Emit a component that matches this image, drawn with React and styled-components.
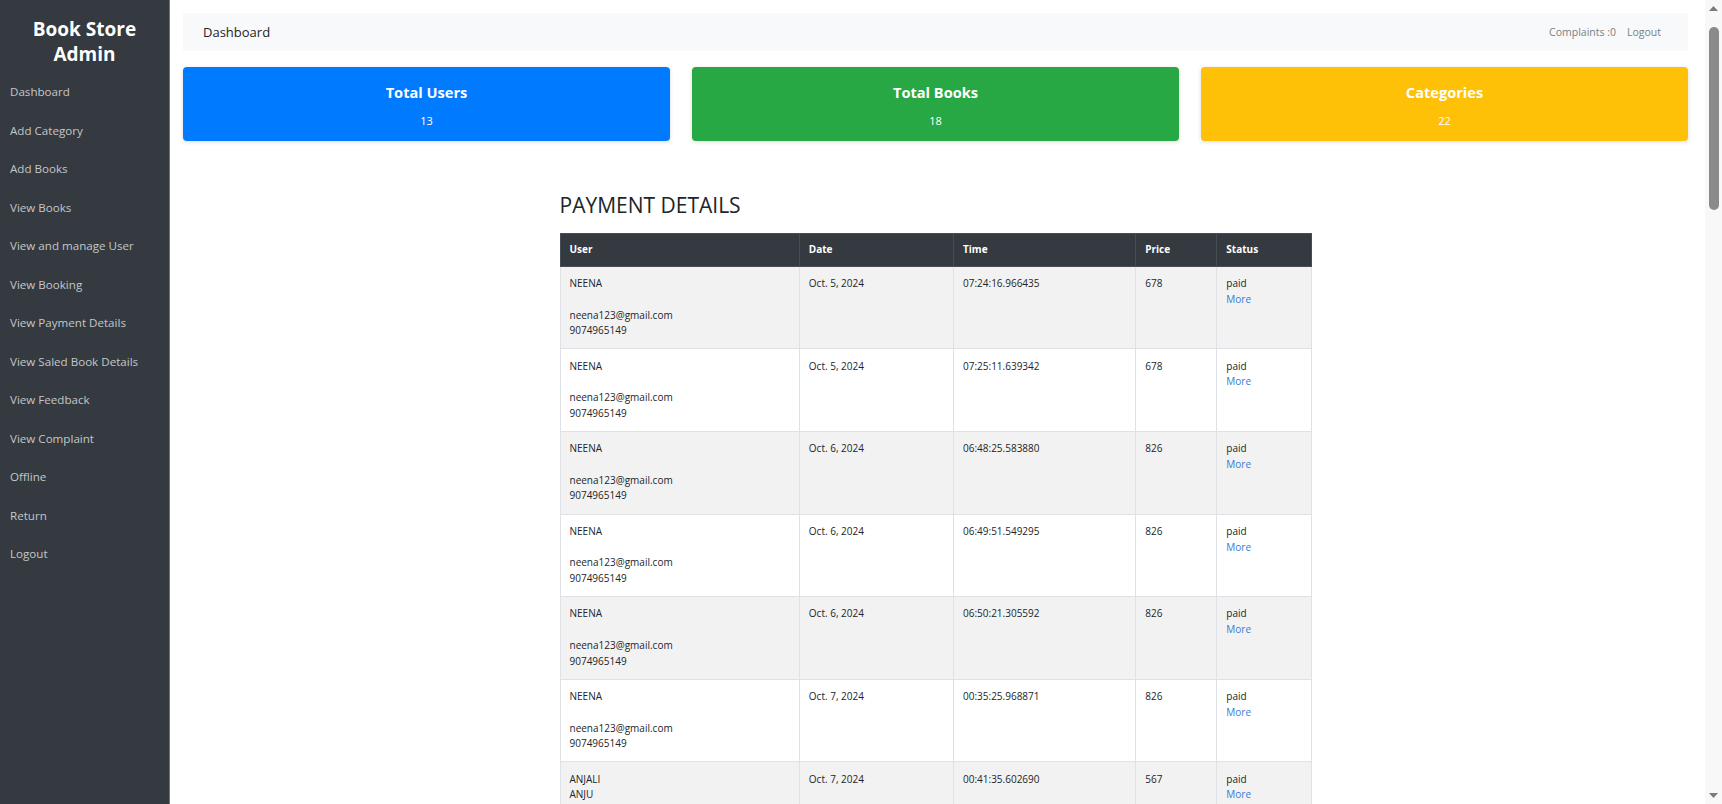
import React from 'react';
import styled, { createGlobalStyle } from 'styled-components';

const GlobalStyle = createGlobalStyle`
    html, body {
        margin: 0;
        padding: 0;
        background: #fff;
        font-family: "Open Sans", "Noto Sans", Arial, sans-serif;
        color: #212529;
    }
    * {
        box-sizing: border-box;
    }
`

const Layout = styled.div`
    display: flex;
    min-height: 100vh;
`

const Sidebar = styled.aside`
    width: 170px;
    flex-shrink: 0;
    background: #343a40;
    border-right: 1px solid #6f747a;
    padding-top: 17px;
`

const Brand = styled.h2`
    margin: 0 0 12px;
    color: #fff;
    font-size: 19px;
    font-weight: 700;
    line-height: 25px;
    text-align: center;
`

const MenuLink = styled.a`
    display: block;
    padding: 0 10px;
    height: 38.5px;
    line-height: 26px;
    color: #c4c6c8;
    font-size: 11.6px;
    text-decoration: none;
    cursor: pointer;
`

const Main = styled.main`
    flex: 1;
    min-width: 0;
    padding: 13px 34px 0 13px;
`

const TopBar = styled.nav`
    display: flex;
    align-items: center;
    justify-content: space-between;
    height: 38px;
    background: #f8f9fa;
    padding: 0 27px 0 20px;
`

const TopTitle = styled.span`
    font-size: 13px;
    color: #212529;
`

const TopLinks = styled.div`
    display: flex;
    gap: 11px;
    font-size: 10.5px;
    color: #7a7f84;
`

const Cards = styled.div`
    display: grid;
    grid-template-columns: repeat(3, 1fr);
    gap: 22px;
    margin-top: 16px;
`

const Card = styled.div`
    height: 74px;
    border-radius: 4px;
    background: ${p => p.$bg};
    color: #fff;
    text-align: center;
    box-shadow: 0 1px 4px rgba(0, 0, 0, 0.15);
    padding-top: 13px;
`

const CardTitle = styled.h5`
    margin: 0;
    font-size: 14.6px;
    font-weight: 700;
    line-height: 24px;
`

const CardValue = styled.p`
    margin: 9px 0 0;
    font-size: 11px;
    line-height: 16px;
`

const Section = styled.section`
    width: 752px;
    margin: 51px auto 0;
`

const Heading = styled.h3`
    margin: 0 0 15px;
    font-size: 21px;
    font-weight: 500;
    line-height: 26px;
    color: #212529;
`

const Table = styled.table`
    width: 100%;
    border-collapse: collapse;
    font-size: 10px;
    line-height: 15.75px;
    color: #212529;
`

const Th = styled.th`
    background: #343a40;
    color: #fff;
    text-align: left;
    font-weight: 700;
    padding: 8px 9px;
    border: 1px solid #454d55;
    width: ${p => p.$w}px;
`

const Row = styled.tr`
    background: ${p => (p.$striped ? '#f2f2f2' : '#fff')};
`

const Td = styled.td`
    vertical-align: top;
    padding: 9.3px 9px;
    border: 1px solid #dee2e6;
`

const MoreLink = styled.a`
    display: block;
    color: #3a7bd5;
    text-decoration: none;
    cursor: pointer;
`

// stand-in for the browser scrollbar seen in the screenshot
const ScrollTrack = styled.div`
    position: fixed;
    top: 0;
    right: 0;
    width: 17px;
    height: 100vh;
    background: #f8f8f8;
    display: flex;
    flex-direction: column;
    align-items: center;
`

const ScrollArrow = styled.svg`
    width: 11px;
    height: 17px;
    flex-shrink: 0;
`

const ScrollThumb = styled.div`
    width: 10px;
    height: 183px;
    margin-top: 10px;
    border-radius: 5px;
    background: #8a8a8a;
`

const ScrollSpace = styled.div`
    flex: 1;
`

const menu = [
    'Dashboard',
    'Add Category',
    'Add Books',
    'View Books',
    'View and manage User',
    'View Booking',
    'View Payment Details',
    'View Saled Book Details',
    'View Feedback',
    'View Complaint',
    'Offline',
    'Return',
    'Logout',
]

const neena = ['NEENA', '', 'neena123@gmail.com', '9074965149']
const anjali = ['ANJALI', 'ANJU', 'anjali@gmail.com', '9947581236']

const payments = [
    { user: neena, date: 'Oct. 5, 2024', time: '07:24:16.966435', price: 678 },
    { user: neena, date: 'Oct. 5, 2024', time: '07:25:11.639342', price: 678 },
    { user: neena, date: 'Oct. 6, 2024', time: '06:48:25.583880', price: 826 },
    { user: neena, date: 'Oct. 6, 2024', time: '06:49:51.549295', price: 826 },
    { user: neena, date: 'Oct. 6, 2024', time: '06:50:21.305592', price: 826 },
    { user: neena, date: 'Oct. 7, 2024', time: '00:35:25.968871', price: 826 },
    { user: anjali, date: 'Oct. 7, 2024', time: '00:41:35.602690', price: 567 },
]

export default function App() {
    return (
        <Layout>
            <GlobalStyle />
            <Sidebar>
                <Brand>Book Store<br />Admin</Brand>
                {menu.map(item => (
                    <MenuLink key={item}>{item}</MenuLink>
                ))}
            </Sidebar>
            <Main>
                <TopBar>
                    <TopTitle>Dashboard</TopTitle>
                    <TopLinks>
                        <span>Complaints :0</span>
                        <span>Logout</span>
                    </TopLinks>
                </TopBar>
                <Cards>
                    <Card $bg="#007bff">
                        <CardTitle>Total Users</CardTitle>
                        <CardValue>13</CardValue>
                    </Card>
                    <Card $bg="#28a745">
                        <CardTitle>Total Books</CardTitle>
                        <CardValue>18</CardValue>
                    </Card>
                    <Card $bg="#ffc107">
                        <CardTitle>Categories</CardTitle>
                        <CardValue>22</CardValue>
                    </Card>
                </Cards>
                <Section>
                    <Heading>PAYMENT DETAILS</Heading>
                    <Table>
                        <thead>
                            <tr>
                                <Th $w={239}>User</Th>
                                <Th $w={154}>Date</Th>
                                <Th $w={182}>Time</Th>
                                <Th $w={81}>Price</Th>
                                <Th $w={94}>Status</Th>
                            </tr>
                        </thead>
                        <tbody>
                            {payments.map((p, i) => (
                                <Row key={i} $striped={i % 2 === 0}>
                                    <Td>
                                        {p.user.map((line, j) => (
                                            <div key={j}>{line || '\u00a0'}</div>
                                        ))}
                                    </Td>
                                    <Td>{p.date}</Td>
                                    <Td>{p.time}</Td>
                                    <Td>{p.price}</Td>
                                    <Td>
                                        paid
                                        <MoreLink>More</MoreLink>
                                    </Td>
                                </Row>
                            ))}
                        </tbody>
                    </Table>
                </Section>
            </Main>
            <ScrollTrack>
                <ScrollArrow viewBox="0 0 11 17">
                    <path d="M1 11 L5.5 6 L10 11 Z" fill="#7a7a7a" />
                </ScrollArrow>
                <ScrollThumb />
                <ScrollSpace />
                <ScrollArrow viewBox="0 0 11 17">
                    <path d="M1 6 L5.5 11 L10 6 Z" fill="#7a7a7a" />
                </ScrollArrow>
            </ScrollTrack>
        </Layout>
    );
}
